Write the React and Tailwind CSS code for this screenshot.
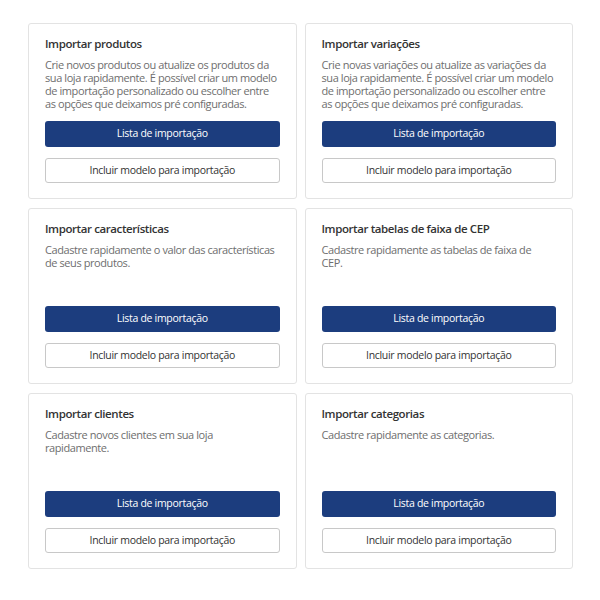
import React from "react";

const cards = [
  {
    title: "Importar produtos",
    desc: [
      "Crie novos produtos ou atualize os produtos da",
      "sua loja rapidamente. É possível criar um modelo",
      "de importação personalizado ou escolher entre",
      "as opções que deixamos pré configuradas.",
    ],
  },
  {
    title: "Importar variações",
    desc: [
      "Crie novas variações ou atualize as variações da",
      "sua loja rapidamente. É possível criar um modelo",
      "de importação personalizado ou escolher entre",
      "as opções que deixamos pré configuradas.",
    ],
  },
  {
    title: "Importar características",
    desc: ["Cadastre rapidamente o valor das características", "de seus produtos."],
  },
  {
    title: "Importar tabelas de faixa de CEP",
    desc: ["Cadastre rapidamente as tabelas de faixa de", "CEP."],
  },
  {
    title: "Importar clientes",
    desc: ["Cadastre novos clientes em sua loja", "rapidamente."],
  },
  {
    title: "Importar categorias",
    desc: ["Cadastre rapidamente as categorias."],
  },
];

function Card({ title, desc }) {
  return (
    <div className="flex h-[176px] flex-col rounded-[3px] border border-[#e3e3e3] bg-white px-[15px] pt-[12px] pb-[15px]">
      <div className="px-[1px] text-[11.5px] leading-[16px] font-semibold tracking-[-0.4px] text-[#333333]">{title}</div>
      <p className="mt-[6px] pl-[1px] text-[11px] leading-[13px] tracking-[-0.42px] text-[#6e6e6e]">
        {desc.map((line, i) => (
          <React.Fragment key={line}>
            {i > 0 && <br />}
            <span className="whitespace-nowrap">{line}</span>
          </React.Fragment>
        ))}
      </p>
      <div className="mt-auto flex flex-col gap-[11px] px-[1px]">
        <button className="h-[26px] w-full rounded-[3px] bg-[#1c3d7e] text-[10.5px] tracking-[-0.3px] text-white">
          Lista de importação
        </button>
        <button className="h-[25px] w-full rounded-[3px] border border-[#c8c8c8] bg-white text-[10.5px] tracking-[-0.3px] text-[#333333]">
          Incluir modelo para importação
        </button>
      </div>
    </div>
  );
}

export default function App() {
  return (
    <div
      className="h-[600px] w-[600px] bg-white pt-[23px] pl-[28px] pr-[27px]"
      style={{ fontFamily: '"Open Sans", sans-serif' }}
    >
      <div className="grid grid-cols-2 gap-x-[8px] gap-y-[9px]">
        {cards.map((c) => (
          <Card key={c.title} {...c} />
        ))}
      </div>
    </div>
  );
}
